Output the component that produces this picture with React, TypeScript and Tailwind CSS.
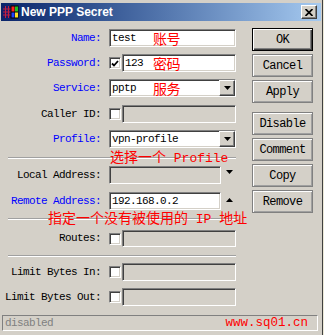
import React from 'react';

const sunken =
  'border border-t-[#808080] border-l-[#808080] border-b-white border-r-white shadow-[inset_1px_1px_0_#404040,inset_-1px_-1px_0_#d4d0c8]';
const raised =
  'border border-t-white border-l-white border-b-[#404040] border-r-[#404040] shadow-[inset_-1px_-1px_0_#808080] bg-[#d4d0c8]';

function DownArrow() {
  return (
    <svg width="7" height="4" viewBox="0 0 7 4">
      <path d="M0 0 H7 L3.5 4 Z" fill="#000" />
    </svg>
  );
}

function UpArrow() {
  return (
    <svg width="7" height="4" viewBox="0 0 7 4">
      <path d="M0 4 H7 L3.5 0 Z" fill="#000" />
    </svg>
  );
}

function Label({ text, blue }: { text: string; blue?: boolean }) {
  return (
    <div className={`w-[101px] shrink-0 text-right ${blue ? 'text-[#0000ff]' : 'text-black'}`}>{text}</div>
  );
}

function Check({ checked }: { checked?: boolean }) {
  return (
    <div className={`w-[12px] h-[12px] shrink-0 bg-white flex items-center justify-center ${sunken}`}>
      {checked && (
        <svg width="8" height="7" viewBox="0 0 8 7">
          <path d="M1 3.5 L3 5.5 L7 1" stroke="#000" strokeWidth="1.8" fill="none" />
        </svg>
      )}
    </div>
  );
}

function Field({ value, white, className = '' }: { value?: string; white?: boolean; className?: string }) {
  return (
    <div className={`h-full flex items-center pl-[2px] ${white ? 'bg-white' : 'bg-[#d4d0c8]'} ${sunken} ${className}`}>
      {value}
    </div>
  );
}

function Select({ value }: { value: string }) {
  return (
    <div className={`relative w-[127px] h-full flex items-center pl-[2px] bg-white ${sunken}`}>
      {value}
      <div className={`absolute right-0 top-0 w-[16px] h-[16px] flex items-center justify-center ${raised}`}>
        <DownArrow />
      </div>
    </div>
  );
}

function Button({ text, def }: { text: string; def?: boolean }) {
  return (
    <div
      className={`h-[23px] flex items-center justify-center bg-[#d4d0c8] text-black text-[12px] ${
        def
          ? 'border border-black shadow-[inset_1px_1px_0_#fff,inset_-1px_-1px_0_#404040,inset_-2px_-2px_0_#808080]'
          : 'border border-[#808080] shadow-[inset_1px_1px_0_#fff,inset_-1px_-1px_0_#a0a0a0]'
      }`}
    >
      {text}
    </div>
  );
}

function Separator() {
  return <div className="ml-[8px] w-[228px] h-[2px] border-t border-t-[#a0a0a0] border-b border-b-white" />;
}

function WinboxIcon() {
  return (
    <svg width="16" height="14" viewBox="0 0 16 14">
      <rect x="0" y="1" width="8" height="12" fill="#1a1a6a" />
      <path d="M0 4 H8 M0 7 H8 M0 10 H8 M2.5 1 V13 M5.5 1 V13" stroke="#c02040" strokeWidth="1" />
      <rect x="7.5" y="0.5" width="8" height="13" fill="#000" />
      <rect x="8.5" y="1.5" width="3" height="5" fill="#ff2020" />
      <rect x="12" y="1.5" width="3" height="5" fill="#20c020" />
      <rect x="8.5" y="7.5" width="3" height="5" fill="#2040ff" />
      <rect x="12" y="7.5" width="3" height="5" fill="#ffe020" />
    </svg>
  );
}

const red = "text-[#ff0000] text-[14px] leading-[14px] font-['Noto_Sans_CJK_SC',sans-serif] whitespace-nowrap";
const redLatin = "font-['Liberation_Mono',monospace] text-[13px]";

export default function App() {
  return (
    <div className="w-[324px] h-[335px] bg-[#ece9d8] overflow-hidden">
      <div className="relative w-[323px] h-[335px] bg-[#d4d0c8] border-r border-[#404040] flex flex-col font-['Liberation_Mono',monospace] text-[11px] tracking-[-0.6px] leading-none">
        {/* title bar */}
        <div className="mt-[3px] ml-[1px] w-[320px] h-[18px] shrink-0 flex items-center pl-[2px] bg-gradient-to-r from-[#0a246a] to-[#a6caf0]">
          <WinboxIcon />
          <span className="ml-[2px] text-white font-bold text-[12px] tracking-normal font-['Liberation_Sans',sans-serif]">
            New PPP Secret
          </span>
          <div className={`ml-auto mr-[4px] w-[16px] h-[14px] flex items-center justify-center ${raised}`}>
            <svg width="8" height="7" viewBox="0 0 8 7">
              <path d="M0.5 0 L7.5 7 M7.5 0 L0.5 7" stroke="#000" strokeWidth="1.7" />
            </svg>
          </div>
        </div>

        <div className="flex mt-[7px]">
          {/* form */}
          <div className="w-[236px] flex flex-col pt-[1px]">
            <div className="flex items-center h-[18px]">
              <Label text="Name:" blue />
              <div className="ml-[8px] w-[127px] h-full">
                <Field value="test" white />
              </div>
            </div>
            <div className="flex items-center h-[18px] mt-[7px]">
              <Label text="Password:" blue />
              <div className="ml-[8px] w-[127px] h-full flex items-center">
                <Check checked />
                <Field value="123" white className="ml-[1px] flex-1" />
              </div>
            </div>
            <div className="flex items-center h-[18px] mt-[7px]">
              <Label text="Service:" blue />
              <div className="ml-[8px] h-full">
                <Select value="pptp" />
              </div>
            </div>
            <div className="flex items-center h-[18px] mt-[8px]">
              <Label text="Caller ID:" />
              <div className="ml-[8px] w-[127px] h-full flex items-center">
                <Check />
                <Field className="ml-[1px] flex-1" />
              </div>
            </div>
            <div className="flex items-center h-[18px] mt-[7px]">
              <Label text="Profile:" blue />
              <div className="ml-[8px] h-full">
                <Select value="vpn-profile" />
              </div>
            </div>
            <div className="mt-[9px]">
              <Separator />
            </div>
            <div className="flex items-center h-[18px] mt-[7px]">
              <Label text="Local Address:" />
              <div className="ml-[8px] h-full flex items-center">
                <Field className="w-[112px]" />
                <div className="ml-[5px] mt-[-6px]">
                  <DownArrow />
                </div>
              </div>
            </div>
            <div className="flex items-center h-[18px] mt-[8px]">
              <Label text="Remote Address:" blue />
              <div className="ml-[8px] h-full flex items-center">
                <Field value="192.168.0.2" white className="w-[112px]" />
                <div className="ml-[5px] mt-[-2px]">
                  <UpArrow />
                </div>
              </div>
            </div>
            <div className="mt-[8px]">
              <Separator />
            </div>
            <div className="flex items-center h-[17px] mt-[10px]">
              <Label text="Routes:" />
              <div className="ml-[8px] w-[127px] h-full flex items-center">
                <Check />
                <Field className="ml-[1px] flex-1" />
              </div>
            </div>
            <div className="mt-[8px]">
              <Separator />
            </div>
            <div className="flex items-center h-[18px] mt-[6px]">
              <Label text="Limit Bytes In:" />
              <div className="ml-[8px] w-[127px] h-full flex items-center">
                <Check />
                <Field className="ml-[1px] flex-1" />
              </div>
            </div>
            <div className="flex items-center h-[18px] mt-[7px]">
              <Label text="Limit Bytes Out:" />
              <div className="ml-[8px] w-[127px] h-full flex items-center">
                <Check />
                <Field className="ml-[1px] flex-1" />
              </div>
            </div>
          </div>

          {/* buttons */}
          <div className="ml-[16px] w-[61px] flex flex-col">
            <Button text="OK" def />
            <div className="mt-[3px]"><Button text="Cancel" /></div>
            <div className="mt-[3px]"><Button text="Apply" /></div>
            <div className="mt-[9px]"><Button text="Disable" /></div>
            <div className="mt-[3px]"><Button text="Comment" /></div>
            <div className="mt-[3px]"><Button text="Copy" /></div>
            <div className="mt-[3px]"><Button text="Remove" /></div>
          </div>
        </div>

        {/* status bar */}
        <div className="mt-[9px] ml-[2px] w-[316px] h-[16px] flex items-center justify-between pl-[2px] pr-[9px] border border-t-[#808080] border-l-[#808080] border-b-white border-r-white">
          <span className="text-[#808080]">disabled</span>
          <span className="text-[#ff0000] text-[12.5px] tracking-normal">www.sq01.cn</span>
        </div>

        {/* red annotations */}
        <div className={`absolute left-[153px] top-[31px] ${red}`}>账号</div>
        <div className={`absolute left-[153px] top-[56px] ${red}`}>密码</div>
        <div className={`absolute left-[153px] top-[81px] ${red}`}>服务</div>
        <div className={`absolute left-[110px] top-[149px] tracking-normal ${red}`}>
          选择一个<span className={redLatin}> Profile</span>
        </div>
        <div className={`absolute left-[48px] top-[210px] tracking-normal ${red}`}>
          指定一个没有被使用的<span className={redLatin}> IP </span>地址
        </div>
      </div>
    </div>
  );
}
